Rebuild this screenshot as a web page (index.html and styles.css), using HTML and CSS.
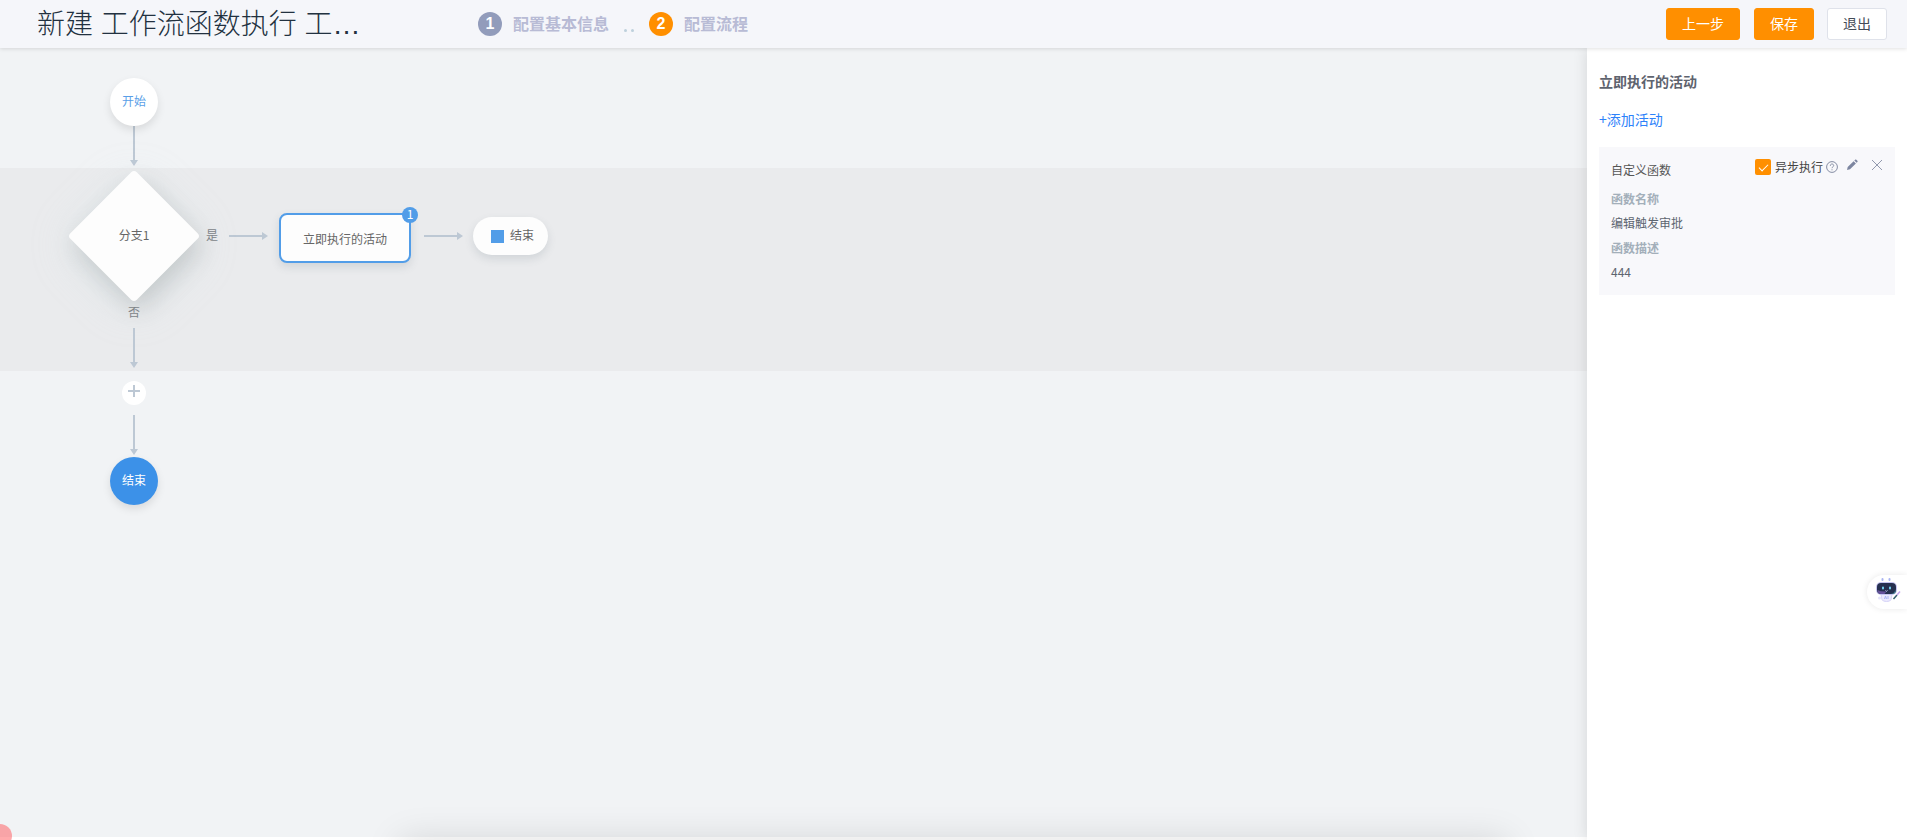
FILE: index.html
```html
<!DOCTYPE html>
<html lang="zh-CN">
<head>
<meta charset="utf-8">
<title>新建工作流</title>
<link rel="stylesheet" href="styles.css">
</head>
<body>
<div class="page">
  <header class="topbar">
    <h1 class="title">新建 工作流函数执行 工…</h1>
    <ol class="steps">
      <li class="step"><span class="step-num">1</span><span class="step-name">配置基本信息</span></li>
      <li class="step-dots" aria-hidden="true"><i></i><i></i></li>
      <li class="step"><span class="step-num active">2</span><span class="step-name">配置流程</span></li>
    </ol>
    <div class="actions">
      <button class="btn primary" type="button">上一步</button>
      <button class="btn primary" type="button">保存</button>
      <button class="btn" type="button">退出</button>
    </div>
  </header>
  <div class="body">
    <main class="canvas">
      <section class="lane lane-start">
        <div class="circle">开始</div>
        <svg class="arrow-down" width="8" height="40" viewBox="0 0 8 40"><path d="M3 0h2v34h3l-4 6-4-6h3z"/></svg>
      </section>
      <section class="band">
        <div class="row">
          <div class="diamond-box"><div class="diamond"></div><span class="diamond-text">分支1</span></div>
          <span class="label yes">是</span>
          <svg class="arrow-right" width="40" height="8" viewBox="0 0 40 8"><path d="M0 3h33v-3l6 4-6 4v-3h-33z"/></svg>
          <div class="task">立即执行的活动<span class="badge">1</span></div>
          <svg class="arrow-right" width="40" height="8" viewBox="0 0 40 8"><path d="M0 3h33v-3l6 4-6 4v-3h-33z"/></svg>
          <div class="pill"><i class="stop"></i><span class="pill-text">结束</span></div>
        </div>
        <div class="lane">
          <span class="label">否</span>
          <svg class="arrow-down spaced" width="8" height="40" viewBox="0 0 8 40"><path d="M3 0h2v34h3l-4 6-4-6h3z"/></svg>
        </div>
      </section>
      <section class="lane lane-end">
        <button class="add" type="button" aria-label="添加"><svg width="12" height="12" viewBox="0 0 12 12"><path d="M5 0h2v5h5v2h-5v5h-2v-5h-5v-2h5z"/></svg></button>
        <svg class="arrow-down" width="8" height="40" viewBox="0 0 8 40"><path d="M3 0h2v34h3l-4 6-4-6h3z"/></svg>
        <div class="circle end">结束</div>
      </section>
    </main>
    <aside class="panel">
      <h2 class="panel-title">立即执行的活动</h2>
      <a class="add-link" href="#">+添加活动</a>
      <section class="card">
        <div class="card-head">
          <h3 class="card-title">自定义函数</h3>
          <div class="tools">
            <input class="check" type="checkbox" id="async" checked>
            <label class="check-label" for="async">异步执行</label>
            <svg class="help" width="12" height="12" viewBox="0 0 12 12"><circle cx="6" cy="6" r="5.4"/><path d="M4.3 4.8c0-2.4 3.4-2.3 3.4-.2C7.700 5.800 6 5.800 6 7.200M6 8.300v1"/></svg>
            <button class="icon-btn edit" type="button" aria-label="编辑"><svg width="12" height="12" viewBox="0 0 12 12"><path d="M1 11l.7-3L7.600 2.200 9.900 4.500 4 10.300zM8.300 1.500l.8-.8c.4-.4.8-.4 1.200 0l1.100 1.100c.4.400.4.800 0 1.200l-.8.800z"/></svg></button>
            <button class="icon-btn close" type="button" aria-label="删除"><svg width="12" height="12" viewBox="0 0 12 12"><path d="M1 1l10 10M11 1L1 11"/></svg></button>
          </div>
        </div>
        <dl class="fields">
          <dt>函数名称</dt><dd>编辑触发审批</dd>
          <dt>函数描述</dt><dd>444</dd>
        </dl>
      </section>
    </aside>
  </div>
  <div class="bottom-shade"></div>
  <div class="corner-dot"></div>
  <button class="assistant" type="button" aria-label="智能助手">
    <svg width="26" height="26" viewBox="0 0 26 26">
      <path d="M7.500 1v1M14.500 1v1" stroke="#a9b4f2" stroke-width="2" stroke-linecap="round"/>
      <path d="M6 16.500h11l-1 5q-.5 2-4.500 2t-4.500-2z" fill="#eceafd" stroke="#d6d3f7"/>
      <circle cx="4.500" cy="20" r="1.500" fill="#e4e3fb"/>
      <rect x="1" y="4" width="21" height="13" rx="5" fill="#c6c5f0"/>
      <rect x="2" y="5" width="19" height="11" rx="4" fill="#26304f"/>
      <path d="M2.500 12q4 2 9 1.500l-2 2.500H6q-3.500 0-3.500-4z" fill="#65519b"/>
      <path d="M15 16q5 0 5.500-5v2q0 3-3.500 3z" fill="#3f8c96"/>
      <path d="M8 9.500v1M15 9.500v1" stroke="#72cfee" stroke-width="2" stroke-linecap="round"/>
      <path d="M10.500 12.500l1 .8 1-.8" fill="none" stroke="#c0c7ef"/>
      <path d="M9.500 21l1-3 1 3M13 18v3" fill="none" stroke="#aab4f5"/>
      <path d="M18.500 21l3.500-4" stroke="#37606f" stroke-width="1.500"/>
      <path d="M22 17l3-3.500" stroke="#c5a4ec" stroke-width="1.500"/>
    </svg>
  </button>
</div>
</body>
</html>
```

FILE: styles.css
```css
* { box-sizing: border-box; }
body {
  margin: 0;
  font-family: "Noto Sans CJK SC", sans-serif;
  font-size: 12px;
  line-height: 20px;
  color: #666;
}
h1, h2, h3, ol, dl, dd { margin: 0; padding: 0; }
button { font-family: inherit; cursor: pointer; }
svg { display: block; flex: none; }
.page {
  position: relative;
  display: flex;
  flex-direction: column;
  min-height: 100vh;
  overflow: hidden;
  background: #fff;
}

.topbar {
  position: relative;
  z-index: 3;
  display: flex;
  align-items: center;
  height: 48px;
  padding: 0 20px 0 37px;
  background: #f5f6fa;
  box-shadow: 0 1px 4px rgba(0, 0, 0, .12);
}
.title {
  width: 330px;
  padding-top: 2px;
  white-space: nowrap;
  font-family: "Liberation Sans", "Noto Sans CJK SC", sans-serif;
  font-size: 28px;
  line-height: 42px;
  font-weight: 300;
  color: #223140;
}
.steps {
  display: flex;
  align-items: center;
  margin-left: 111px;
  list-style: none;
}
.step {
  display: flex;
  align-items: center;
  gap: 11px;
  font-size: 16px;
  font-weight: 700;
  color: #b8bbd5;
}
.step-name { padding-bottom: 2px; }
.step-num {
  width: 24px;
  height: 24px;
  border-radius: 50%;
  background: #929cbb;
  color: #fff;
  font: bold 16px/24px "Liberation Sans", sans-serif;
  text-align: center;
}
.step-num.active { background: #ff8f00; }
.step-dots { display: flex; gap: 4px; margin: 12px 15px 0 15px; }
.step-dots i { width: 3px; height: 3px; border-radius: 50%; background: #bed0dc; }
.actions { display: flex; gap: 13px; margin-left: auto; }
.btn {
  height: 32px;
  padding: 0 15px 2px;
  border: 1px solid #dfe2ea;
  border-radius: 3px;
  background: #fff;
  font-size: 14px;
  line-height: 20px;
  color: #444b57;
}
.btn.primary { border-color: #ff8f00; background: #ff8f00; color: #fff; }
.btn.primary:first-child { margin-right: 1px; }

.body { display: flex; flex: 1; }
.canvas {
  flex: 1;
  margin-bottom: 3px;
  padding-top: 30px;
  background: #f1f3f5;
}
.lane {
  display: flex;
  flex-direction: column;
  align-items: center;
  width: 132px;
  margin-left: 68px;
}
.circle {
  position: relative;
  width: 48px;
  height: 48px;
  border-radius: 50%;
  background: #fff;
  box-shadow: 0 4px 8px rgba(0, 0, 0, .1);
  line-height: 46px;
  text-align: center;
  color: #5a9fe8;
}
.circle.end { margin-top: 2px; background: #3c91e8; color: #fff; }
.arrow-down, .arrow-right { fill: #bdc8d4; }
.band {
  margin-top: 2px;
  padding: 2px 0 3px;
  background: #eaebed;
}
.row { display: flex; align-items: center; margin-left: 68px; }
.diamond-box {
  position: relative;
  display: grid;
  place-items: center;
  width: 132px;
  height: 132px;
}
.diamond {
  grid-area: 1 / 1;
  width: 94px;
  height: 94px;
  border-radius: 4px;
  background: #fdfdfd;
  box-shadow: 10px 4px 24px rgba(0, 0, 0, .13), 6px 6px 42px rgba(200, 224, 226, .35);
  transform: rotate(45deg);
}
.diamond-text { grid-area: 1 / 1; z-index: 1; padding-bottom: 2px; }
.label { position: relative; color: #808488; }
.yes { margin: 0 11px 0 6px; padding-bottom: 2px; }
.task {
  position: relative;
  min-width: 132px;
  height: 50px;
  margin: 4px 13px 0 10px;
  padding: 0 22px;
  border: 2px solid #529de8;
  border-radius: 8px;
  background: #fdfdfd;
  box-shadow: 0 4px 8px rgba(80, 100, 110, .16);
  line-height: 48px;
}
.badge {
  position: absolute;
  top: -8px;
  right: -9px;
  width: 16px;
  height: 16px;
  border-radius: 50%;
  background: #529de8;
  line-height: 14px;
  text-align: center;
  color: #fff;
}
.pill {
  display: flex;
  align-items: center;
  gap: 6px;
  height: 38px;
  margin-left: 9px;
  padding: 0 14px 0 18px;
  border-radius: 20px;
  background: #fdfdfd;
  box-shadow: 0 4px 8px rgba(80, 100, 110, .16);
}
.pill-text { padding-bottom: 2px; }
.stop { width: 13px; height: 13px; background: #529de8; }
.spaced { position: relative; margin-top: 6px; }
.lane-end { padding-top: 10px; }
.add {
  display: flex;
  justify-content: center;
  width: 24px;
  height: 24px;
  margin-bottom: 10px;
  padding: 4px 0 0;
  border: 0;
  border-radius: 50%;
  background: #fff;
}
.add svg { fill: #bdc8d4; }

.panel {
  position: relative;
  z-index: 2;
  width: 320px;
  padding: 22px 12px;
  background: #fff;
  box-shadow: 0 0 14px rgba(0, 0, 0, .12);
}
.panel-title { font-size: 14px; line-height: 22px; font-weight: 700; color: #5e636e; }
.add-link {
  display: block;
  margin: 16px 0 17px;
  font-size: 14px;
  line-height: 22px;
  color: #2d82fa;
  text-decoration: none;
}
.card { padding: 12px 12px 13px; background: #f8f8fb; }
.card-head { display: flex; justify-content: space-between; }
.card-title { margin-top: 1px; font-size: 12px; font-weight: 400; color: #555; }
.tools { display: flex; align-items: flex-start; }
.check {
  appearance: none;
  width: 16px;
  height: 16px;
  margin: 0;
  border-radius: 2px;
  background: #ff8f00;
}
.check::before {
  content: "";
  display: block;
  width: 8px;
  height: 4px;
  margin: 5px 4px;
  border: solid #fff;
  border-width: 0 0 1px 1px;
  transform: rotate(-45deg);
}
.check-label { margin: -2px 3px 0 4px; color: #444; }
.help { margin-top: 2px; fill: none; stroke: #858da3; }
.icon-btn { padding: 0; border: 0; background: none; }
.edit { margin-left: 8px; fill: #7d86a0; }
.close { margin: 0 0 0 13px; fill: none; stroke: #9299ae; }
.fields dt { margin-top: 9px; line-height: 20px; font-weight: 700; color: #a3afba; }
.fields dd { margin-top: 4px; color: #5d6570; }
.fields dd + dt { margin-top: 5px; }

.bottom-shade {
  position: absolute;
  top: 100%;
  left: 21%;
  right: 21%;
  height: 40px;
  box-shadow: 0 0 36px rgba(0, 0, 0, .13);
}
.corner-dot {
  position: absolute;
  bottom: -8px;
  left: -12px;
  width: 24px;
  height: 24px;
  border-radius: 50%;
  background: rgba(255, 92, 96, .52);
}
.assistant {
  position: absolute;
  z-index: 4;
  right: 0;
  bottom: 231px;
  width: 40px;
  height: 34px;
  padding: 0 0 2px 8px;
  border: 0;
  border-radius: 17px 0 0 17px;
  background: #fff;
  box-shadow: 0 0 6px rgba(0, 0, 0, .09);
}
```
